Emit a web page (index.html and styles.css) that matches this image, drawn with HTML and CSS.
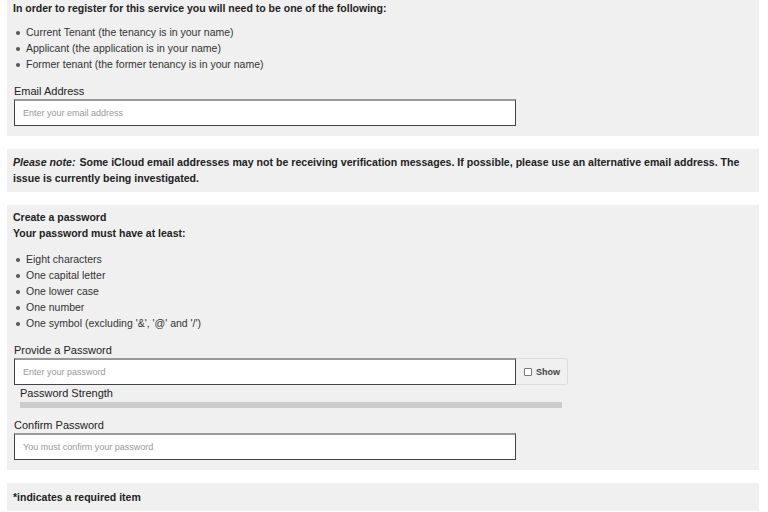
FILE: index.html
```html
<!DOCTYPE html>
<html>
<head>
<meta charset="utf-8">
<link rel="stylesheet" href="styles.css">
</head>
<body>
<div class="page">
  <section class="panel p1">
    <p class="lead">In order to register for this service you will need to be one of the following:</p>
    <ul class="list">
      <li>Current Tenant (the tenancy is in your name)</li>
      <li>Applicant (the application is in your name)</li>
      <li>Former tenant (the former tenancy is in your name)</li>
    </ul>
    <div class="field">
      <label class="label">Email Address</label>
      <input class="input" type="text" placeholder="Enter your email address">
    </div>
  </section>
  <section class="panel p2">
    <p class="note"><em>Please note:</em> <span>Some iCloud email addresses may not be receiving verification messages. If possible, please use an alternative email address. The</span><br><span>issue is currently being investigated.</span></p>
  </section>
  <section class="panel p3">
    <p class="lead">Create a password</p>
    <p class="lead">Your password must have at least:</p>
    <ul class="list list2">
      <li>Eight characters</li>
      <li>One capital letter</li>
      <li>One lower case</li>
      <li>One number</li>
      <li>One symbol (excluding '&amp;', '@' and '/')</li>
    </ul>
    <div class="field">
      <label class="label">Provide a Password</label>
      <div class="pwrow">
        <input class="input" type="password" placeholder="Enter your password">
        <span class="show"><span class="box"></span>Show</span>
      </div>
      <div class="strength">Password Strength</div>
      <div class="bar"></div>
    </div>
    <div class="field f2">
      <label class="label">Confirm Password</label>
      <input class="input" type="password" placeholder="You must confirm your password">
    </div>
  </section>
  <section class="panel p4">
    <p class="lead">*indicates a required item</p>
  </section>
</div>
</body>
</html>
```
FILE: styles.css
```css
* { box-sizing: border-box; }
html, body { margin: 0; padding: 0; background: #fff; }
body { font-family: "Liberation Sans", Arial, sans-serif; color: #333; font-size: 11px; }
.page { margin: 0 9px 0 7px; display: flex; flex-direction: column; gap: 13px; }
.panel { background: #f0f0f0; padding: 0 6px; }
.p1 { padding-top: 0; padding-bottom: 10px; }
.lead { margin: 0; font-weight: bold; font-size: 10.5px; line-height: 16px; color: #222; }
.list { list-style: none; margin: 8px 0 0 0; padding: 0 0 0 13px; line-height: 16px; font-size: 10.5px; }
.list li { position: relative; }
.list li::before { content: ""; position: absolute; left: -10px; top: 7px; width: 4px; height: 4px; border-radius: 50%; background: #555; }
.field { margin-top: 11px; padding-left: 1px; }
.label { display: block; font-size: 11px; line-height: 16px; color: #222; }
.input { display: block; width: 502px; height: 27px; margin: 0; border: 1px solid #444; border-top: 2px solid #999; background: #fff; padding: 0 8px; font-family: "Liberation Sans", Arial, sans-serif; font-size: 9px; color: #333; outline: none; }
.input::placeholder { color: #999; }
.p2 { padding-top: 5px; padding-bottom: 6px; }
.note { margin: 0; font-weight: bold; font-size: 10.6px; line-height: 16px; color: #222; }
.note em { display: inline-block; font-weight: bold; padding-right: 1px; }
.p3 { padding-top: 4px; padding-bottom: 10px; }
.list2 { margin-top: 10px; }
.pwrow { display: flex; align-items: stretch; }
.show { display: flex; align-items: center; gap: 4px; width: 52px; height: 27px; border: 1px solid #ddd; border-left: none; border-radius: 0 3px 3px 0; padding-left: 8px; font-size: 9px; font-weight: bold; color: #444; }
.box { width: 8px; height: 8px; border: 1px solid #777; border-radius: 1px; background: #fff; }
.strength { margin-left: 6px; font-size: 11px; line-height: 16px; color: #222; }
.bar { margin: 1px 0 0 6px; width: 542px; height: 6px; background: #ccc; }
.f2 { margin-top: 9px; }
.p4 { padding-top: 6px; padding-bottom: 6px; }
```
